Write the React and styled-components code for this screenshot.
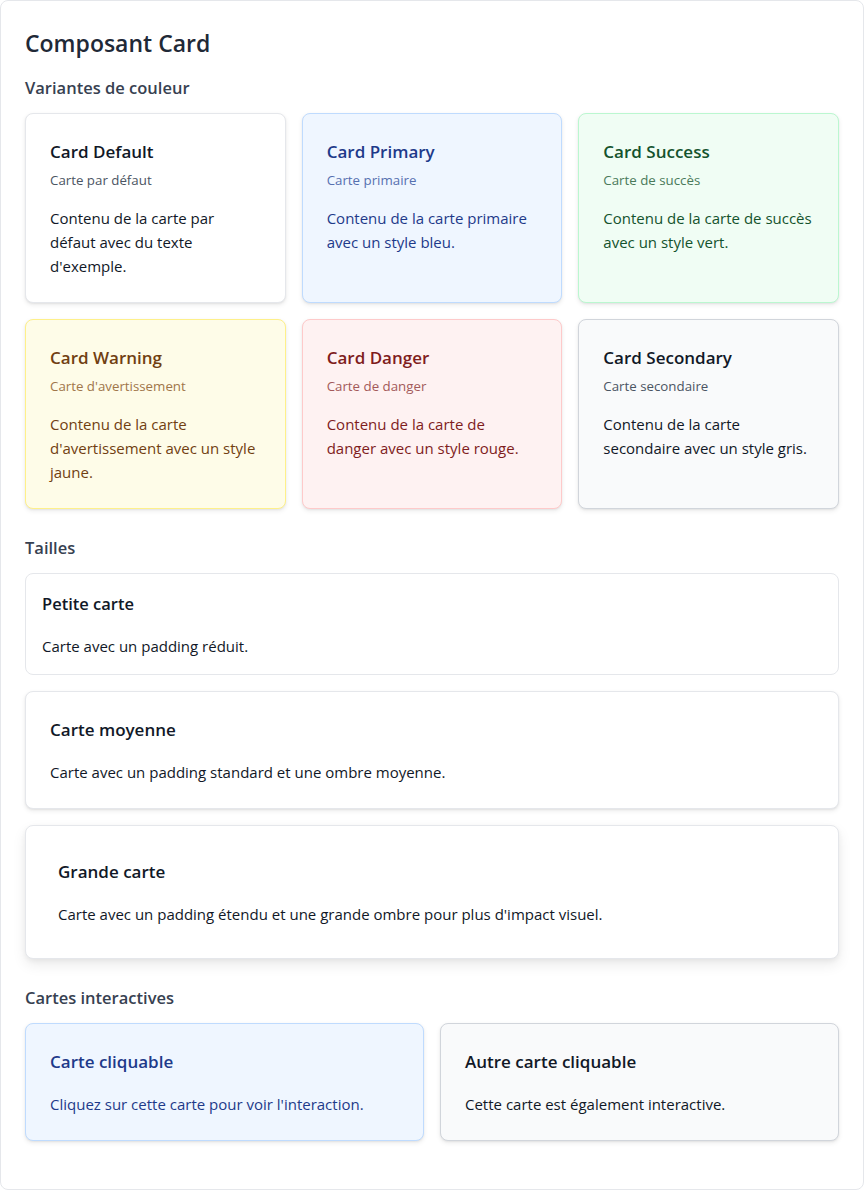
import React from 'react';
import styled, { createGlobalStyle, css } from 'styled-components';

const GlobalStyle = createGlobalStyle`
    * { box-sizing: border-box; }
    body {
        margin: 0;
        background: #ffffff;
        font-family: "Open Sans", "Noto Sans", "Liberation Sans", sans-serif;
        color: #111827;
    }
    h1, h2, h3, p { margin: 0; }
`;

const variants = {
    default: { bg: '#ffffff', border: '#e5e7eb', title: '#111827', text: '#111827', sub: '#4b5563' },
    primary: { bg: '#eff6ff', border: '#bfdbfe', title: '#1e3a8a', text: '#1e3a8a', sub: '#5670b0' },
    success: { bg: '#f0fdf4', border: '#bbf7d0', title: '#14532d', text: '#14532d', sub: '#4a7a5a' },
    warning: { bg: '#fefce8', border: '#fef08a', title: '#713f12', text: '#713f12', sub: '#a0764a' },
    danger: { bg: '#fef2f2', border: '#fecaca', title: '#7f1d1d', text: '#7f1d1d', sub: '#a35a5a' },
    secondary: { bg: '#f9fafb', border: '#d1d5db', title: '#111827', text: '#111827', sub: '#4b5563' },
};

const sizes = {
    sm: { pad: '16px', title: '16.5px', shadow: 'none' },
    md: { pad: '24px', title: '17px', shadow: '0 2px 5px rgba(0, 0, 0, 0.08), 0 1px 2px rgba(0, 0, 0, 0.06)' },
    lg: { pad: '32px', title: '17px', shadow: '0 6px 14px rgba(0, 0, 0, 0.08), 0 2px 5px rgba(0, 0, 0, 0.05)' },
};

const Page = styled.div`
    width: 864px;
    min-height: 1190px;
    border: 1px solid #e5e7eb;
    border-radius: 8px;
    background: #ffffff;
    padding: 24px 24px 48px;
`;

const PageTitle = styled.h1`
    font-size: 23px;
    line-height: 36px;
    font-weight: 600;
    color: #1f2937;
    margin-bottom: 14px;
`;

const Section = styled.section`
    & + & { margin-top: 26px; }
`;

const SectionTitle = styled.h2`
    font-size: 16.5px;
    line-height: 26px;
    font-weight: 600;
    color: #374151;
    margin-bottom: 12px;
`;

const Grid = styled.div`
    display: grid;
    grid-template-columns: repeat(${props => props.cols}, 1fr);
    gap: 16px;
`;

const Stack = styled.div`
    display: flex;
    flex-direction: column;
    gap: 16px;
`;

const Card = styled.div`
    border-radius: 8px;
    border: 1px solid ${props => variants[props.variant].border};
    background: ${props => variants[props.variant].bg};
    color: ${props => variants[props.variant].text};
    padding: ${props => sizes[props.size].pad};
    box-shadow: ${props => sizes[props.size].shadow};
    ${props => props.clickable && css`
        cursor: pointer;
        transition: transform 0.15s, box-shadow 0.15s;
        &:hover { transform: translateY(-1px); }
    `}
`;

const CardTitle = styled.h3`
    font-size: ${props => sizes[props.size].title};
    line-height: 28px;
    font-weight: 600;
    color: ${props => variants[props.variant].title};
`;

const CardSubtitle = styled.p`
    font-size: 13.3px;
    line-height: 20px;
    margin-top: 4px;
    color: ${props => variants[props.variant].sub};
`;

const CardBody = styled.p`
    font-size: 15px;
    line-height: 24px;
    margin-top: 16px;
`;

const colorCards = [
    { variant: 'default', title: 'Card Default', sub: 'Carte par défaut', body: "Contenu de la carte par défaut avec du texte d'exemple." },
    { variant: 'primary', title: 'Card Primary', sub: 'Carte primaire', body: 'Contenu de la carte primaire avec un style bleu.' },
    { variant: 'success', title: 'Card Success', sub: 'Carte de succès', body: 'Contenu de la carte de succès avec un style vert.' },
    { variant: 'warning', title: 'Card Warning', sub: "Carte d'avertissement", body: "Contenu de la carte d'avertissement avec un style jaune." },
    { variant: 'danger', title: 'Card Danger', sub: 'Carte de danger', body: 'Contenu de la carte de danger avec un style rouge.' },
    { variant: 'secondary', title: 'Card Secondary', sub: 'Carte secondaire', body: 'Contenu de la carte secondaire avec un style gris.' },
];

const sizeCards = [
    { size: 'sm', title: 'Petite carte', body: 'Carte avec un padding réduit.' },
    { size: 'md', title: 'Carte moyenne', body: 'Carte avec un padding standard et une ombre moyenne.' },
    { size: 'lg', title: 'Grande carte', body: "Carte avec un padding étendu et une grande ombre pour plus d'impact visuel." },
];

const clickCards = [
    { variant: 'primary', title: 'Carte cliquable', body: "Cliquez sur cette carte pour voir l'interaction." },
    { variant: 'secondary', title: 'Autre carte cliquable', body: 'Cette carte est également interactive.' },
];

export default function App() {
    const [clicks, setClicks] = React.useState(0);

    return (
        <React.Fragment>
            <GlobalStyle />
            <Page>
                <PageTitle>Composant Card</PageTitle>

                <Section>
                    <SectionTitle>Variantes de couleur</SectionTitle>
                    <Grid cols={3}>
                        {colorCards.map(c => (
                            <Card key={c.variant} variant={c.variant} size="md">
                                <CardTitle variant={c.variant} size="md">{c.title}</CardTitle>
                                <CardSubtitle variant={c.variant}>{c.sub}</CardSubtitle>
                                <CardBody>{c.body}</CardBody>
                            </Card>
                        ))}
                    </Grid>
                </Section>

                <Section>
                    <SectionTitle>Tailles</SectionTitle>
                    <Stack>
                        {sizeCards.map(c => (
                            <Card key={c.size} variant="default" size={c.size}>
                                <CardTitle variant="default" size={c.size}>{c.title}</CardTitle>
                                <CardBody>{c.body}</CardBody>
                            </Card>
                        ))}
                    </Stack>
                </Section>

                <Section>
                    <SectionTitle>Cartes interactives</SectionTitle>
                    <Grid cols={2}>
                        {clickCards.map(c => (
                            <Card
                                key={c.title}
                                variant={c.variant}
                                size="md"
                                clickable
                                onClick={() => setClicks(clicks + 1)}
                            >
                                <CardTitle variant={c.variant} size="md">{c.title}</CardTitle>
                                <CardBody>{c.body}</CardBody>
                            </Card>
                        ))}
                    </Grid>
                </Section>
            </Page>
        </React.Fragment>
    );
}
